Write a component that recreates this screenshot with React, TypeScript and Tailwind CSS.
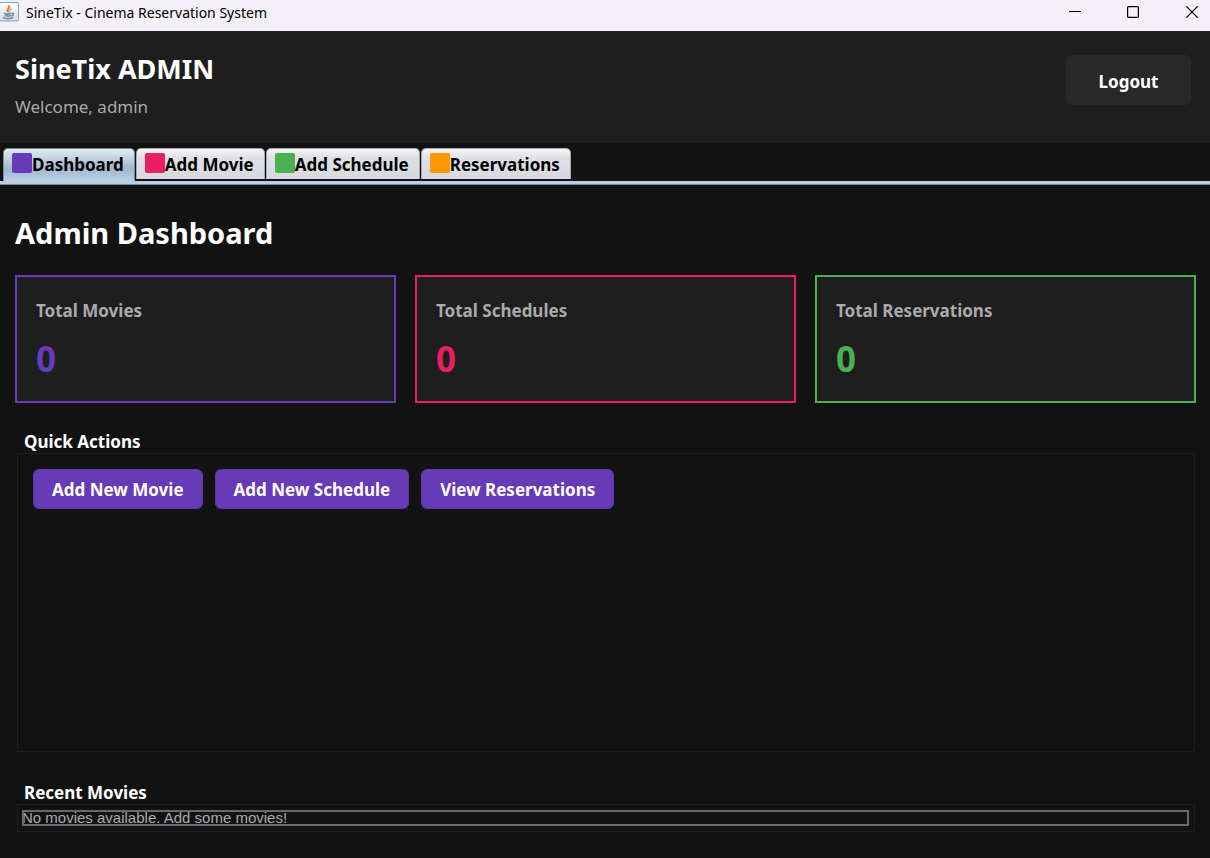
import { useState } from "react";
import clsx from "clsx";

const tabs = [
  { name: "Dashboard", swatch: "bg-[#673ab7]" },
  { name: "Add Movie", swatch: "bg-[#e91e63]" },
  { name: "Add Schedule", swatch: "bg-[#4caf50]" },
  { name: "Reservations", swatch: "bg-[#ff9800]" },
];

const stats = [
  { label: "Total Movies", value: 0, border: "border-[#673ab7]", text: "text-[#673ab7]" },
  { label: "Total Schedules", value: 0, border: "border-[#e91e63]", text: "text-[#e91e63]" },
  { label: "Total Reservations", value: 0, border: "border-[#4caf50]", text: "text-[#4caf50]" },
];

const actions = ["Add New Movie", "Add New Schedule", "View Reservations"];

function JavaIcon() {
  return (
    <svg width="19" height="21" viewBox="0 0 19 21" aria-hidden="true">
      <defs>
        <linearGradient id="tile" x1="0" y1="0" x2="0" y2="1">
          <stop offset="0" stopColor="#ffffff" />
          <stop offset="1" stopColor="#d9dcde" />
        </linearGradient>
      </defs>
      <rect x="-0.5" y="0.5" width="19" height="18.5" rx="1.5" fill="url(#tile)" stroke="#86a5b8" />
      <path d="M8.300 10.500C4.500 8 9.300 6.500 8.700 3.200C11.700 6 7 7.300 8.300 10.500Z" fill="#e8772e" stroke="#e8772e" strokeWidth="1" />
      <path d="M9.800 10.300C8.300 8.600 10.500 7.800 11.500 6.500" fill="none" stroke="#eb9a55" strokeWidth="1.300" />
      <path d="M4 11.300C6 12.200 9.800 12.100 11.500 11.300M4.800 13.300C6.700 14.200 9.200 14.200 10.800 13.300M11.800 11.300C14.500 10.700 13.500 13.700 11.300 14M2.800 15.400C5.500 17.200 10.500 17 13.200 15.400" fill="none" stroke="#6d90a8" strokeWidth="1.500" />
    </svg>
  );
}

function TitleBar() {
  return (
    <div className="flex h-[31px] shrink-0 items-start justify-between bg-[#f4f0f8] text-black">
      <div className="flex items-start gap-[7px] pt-[2px]">
        <JavaIcon />
        <span className="pt-px font-['Noto_Sans',sans-serif] text-[14px] leading-5">SineTix - Cinema Reservation System</span>
      </div>
      <div className="flex">
        <button aria-label="Minimize" className="flex h-6 w-[58px] items-center justify-center">
          <svg width="12" height="12" viewBox="0 0 12 12"><path d="M0 5.500H12" stroke="black" /></svg>
        </button>
        <button aria-label="Maximize" className="flex h-6 w-[58px] items-center justify-center">
          <svg width="12" height="12" viewBox="0 0 12 12"><rect x="0.600" y="0.600" width="10.800" height="10.800" rx="1" fill="none" stroke="black" strokeWidth="1.200" /></svg>
        </button>
        <button aria-label="Close" className="flex h-6 w-12 items-center justify-center pl-3">
          <svg width="12" height="12" viewBox="0 0 12 12"><path d="M0.300 0.300L11.700 11.700M11.700 0.300L0.300 11.700" stroke="black" strokeWidth="1.200" /></svg>
        </button>
      </div>
    </div>
  );
}

export default function App() {
  const [active, setActive] = useState("Dashboard");

  return (
    <div className="flex min-h-screen flex-col bg-[#121212] font-['Noto_Sans',sans-serif] text-white">
      <TitleBar />

      <header className="flex h-28 shrink-0 items-start justify-between bg-[#1e1e1e] pt-6 pr-[19px] pl-[15px]">
        <div>
          <h1 className="text-[27px] leading-7 font-bold">SineTix ADMIN</h1>
          <p className="mt-[14px] text-[17px] leading-5 text-[#aaaaaa]">Welcome, admin</p>
        </div>
        <button className="h-[50px] w-[125px] rounded-md bg-[#282828] pt-[3px] text-[17px] font-bold">Logout</button>
      </header>

      <div role="tablist" className="flex h-[38px] shrink-0 items-end gap-px pl-[3px]">
        {tabs.map((tab) => (
          <button
            key={tab.name}
            role="tab"
            aria-selected={active === tab.name}
            onClick={() => setActive(tab.name)}
            className={clsx(
              "flex items-start rounded-t-[5px] border border-b-0 pt-1 pr-[10px] pl-2 text-[17px] leading-6 font-bold text-black",
              active === tab.name
                ? "h-[33px] border-[#7a8a99] bg-linear-to-b from-[#e4edf4] via-[#a3b8cb] via-60% to-[#b8cfe5]"
                : "mb-[2px] h-[31px] border-[#a5a7ad] bg-linear-to-b from-[#f5f5f8] via-[#dfe0e6] via-30% to-[#d8d9df]",
            )}
          >
            <span className={clsx("size-5 rounded-xs", tab.swatch)} />
            {tab.name}
          </button>
        ))}
      </div>
      <div className="h-1 shrink-0 border-b border-[#7a8a99] bg-[#b8cfe5]" />

      <main className="flex grow flex-col pr-[14px] pb-[26px] pl-[15px]">
        <h2 className="pt-7 text-[29px] leading-10 font-bold">Admin Dashboard</h2>

        <div className="mt-[22px] grid grid-cols-3 gap-[19px]">
          {stats.map((stat) => (
            <section key={stat.label} className={clsx("h-32 border-2 bg-[#1e1e1e] px-[19px] pt-6", stat.border)}>
              <h3 className="text-[17px] leading-5 font-bold text-[#aaaaaa]">{stat.label}</h3>
              <p className={clsx("mt-[18px] text-[35px] leading-10 font-bold", stat.text)}>{stat.value}</p>
            </section>
          ))}
        </div>

        <section className="mt-7 flex grow flex-col pr-px pl-[2px]">
          <h3 className="pl-[7px] text-[17px] leading-[22px] font-bold">Quick Actions</h3>
          <div className="flex grow flex-wrap items-start gap-3 border border-[#1e1e1e] p-[15px]">
            {actions.map((action) => (
              <button key={action} className="h-10 rounded-md border border-[#5c35a3] bg-[#673ab7] px-[18px] pt-[2px] text-[17px] leading-6 font-bold">
                {action}
              </button>
            ))}
          </div>
        </section>

        <section className="mt-[30px] pr-px pl-[2px]">
          <h3 className="pl-[7px] text-[17px] leading-[22px] font-bold">Recent Movies</h3>
          <div className="border border-[#1e1e1e] py-[5px] pr-[5px] pl-1">
            <div className="relative">
              <p className="font-['Liberation_Sans',Arial,sans-serif] text-[15px] leading-4 text-[#aaaaaa]">
                No movies available. Add some movies!
              </p>
              <div className="pointer-events-none absolute inset-0 border-2 border-[#666970]" />
            </div>
          </div>
        </section>
      </main>
    </div>
  );
}
